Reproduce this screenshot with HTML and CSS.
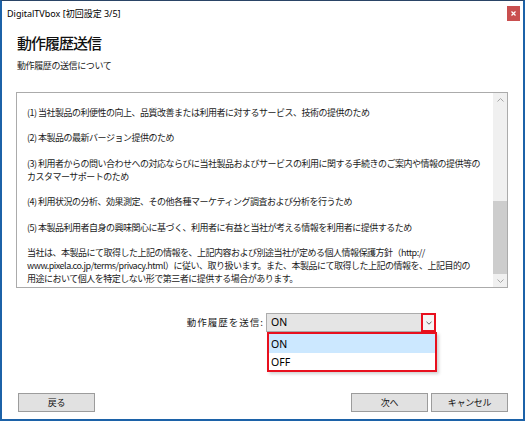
FILE: index.html
```html
<!DOCTYPE html>
<html lang="ja">
<head>
<meta charset="utf-8">
<title>DigitalTVbox</title>
<link rel="stylesheet" href="styles.css">
</head>
<body>
<div class="window">
  <div class="titlebar">
    <span class="title">DigitalTVbox [初回設定 3/5]</span>
    <span class="close"><svg width="5" height="5" viewBox="0 0 5 5"><path d="M0.5 0.5L4.5 4.5M4.5 0.5L0.5 4.5" stroke="#fff" stroke-width="1.2"/></svg></span>
  </div>
  <div class="main">
    <h1 class="heading">動作履歴送信</h1>
    <p class="subtitle">動作履歴の送信について</p>
    <div class="textbox">
      <div class="text">
        <p>(1) 当社製品の利便性の向上、品質改善または利用者に対するサービス、技術の提供のため</p>
        <p>(2) 本製品の最新バージョン提供のため</p>
        <p>(3) 利用者からの問い合わせへの対応ならびに当社製品およびサービスの利用に関する手続きのご案内や情報の提供等の<br>カスタマーサポートのため</p>
        <p>(4) 利用状況の分析、効果測定、その他各種マーケティング調査および分析を行うため</p>
        <p>(5) 本製品利用者自身の興味関心に基づく、利用者に有益と当社が考える情報を利用者に提供するため</p>
        <p>当社は、本製品にて取得した上記の情報を、上記内容および別途当社が定める個人情報保護方針（http://<br>www.pixela.co.jp/terms/privacy.html）に従い、取り扱います。また、本製品にて取得した上記の情報を、上記目的の<br>用途において個人を特定しない形で第三者に提供する場合があります。</p>
      </div>
      <div class="scrollbar">
        <div class="sb-btn"><svg width="7" height="4" viewBox="0 0 7 4"><path d="M0.5 3.5L3.5 0.5L6.5 3.5" fill="none" stroke="#a6a6a6" stroke-width="1"/></svg></div>
        <div class="track"><div class="thumb"></div></div>
        <div class="sb-btn"><svg width="7" height="4" viewBox="0 0 7 4"><path d="M0.5 0.5L3.5 3.5L6.5 0.5" fill="none" stroke="#a6a6a6" stroke-width="1"/></svg></div>
      </div>
    </div>
    <div class="combo-row">
      <span class="label">動作履歴を送信:</span>
      <div class="combo">
        <span class="field">ON</span>
        <span class="dropbtn"><svg width="6" height="4" viewBox="0 0 6 4"><path d="M0.5 0.8L3 3.2L5.5 0.8" fill="none" stroke="#606060" stroke-width="1"/></svg></span>
        <ul class="list">
          <li class="item selected">ON</li>
          <li class="item">OFF</li>
        </ul>
      </div>
    </div>
    <div class="buttons">
      <button class="btn">戻る</button>
      <div class="btn-group">
        <button class="btn">次へ</button>
        <button class="btn">キャンセル</button>
      </div>
    </div>
  </div>
</div>
</body>
</html>
```
FILE: styles.css
```css
* {
  box-sizing: border-box;
  margin: 0;
  padding: 0;
}

body {
  margin: 0;
  width: 525px;
  height: 421px;
  overflow: hidden;
  background: #ffffff;
  font-family: "Noto Sans CJK JP", sans-serif;
  color: #1a1a1a;
}

.window {
  width: 525px;
  height: 421px;
  border-top: 1px solid #2a4466;
  border-left: 2px solid #1c62a8;
  border-right: 2px solid #1c62a8;
  border-bottom: 2px solid #1c62a8;
  display: flex;
  flex-direction: column;
  background: #ffffff;
}

.titlebar {
  height: 27px;
  display: flex;
  justify-content: space-between;
  align-items: flex-start;
  padding-left: 5px;
  padding-right: 3px;
}

.title {
  font-family: "Noto Sans", "Noto Sans CJK JP", sans-serif;
  font-size: 9px;
  line-height: 13px;
  margin-top: 5.5px;
  color: #000000;
}

.close {
  width: 13px;
  height: 15px;
  margin-top: 5px;
  background: #c94f4f;
  display: flex;
  align-items: center;
  justify-content: center;
}

.main {
  flex: 1;
  display: flex;
  flex-direction: column;
  padding: 0 15px 7px 14px;
}

.heading {
  font-size: 15px;
  line-height: 18px;
  font-weight: 500;
  letter-spacing: -1px;
  margin: 6px 0 0 1px;
  color: #111111;
}

.subtitle {
  font-size: 9px;
  line-height: 13px;
  letter-spacing: -0.4px;
  margin: 7px 0 0 1px;
}

.textbox {
  margin-top: 20px;
  height: 196px;
  border: 1px solid #ababab;
  display: flex;
}

.text {
  flex: 1;
  padding: 12.5px 0 0 10px;
  font-size: 9px;
  line-height: 13px;
  letter-spacing: -0.5px;
  white-space: nowrap;
  overflow: hidden;
}

.text p {
  margin-bottom: 12.5px;
}

.scrollbar {
  width: 14px;
  background: #f0f0f0;
  display: flex;
  flex-direction: column;
}

.sb-btn {
  height: 13px;
  display: flex;
  align-items: center;
  justify-content: center;
}

.track {
  flex: 1;
  display: flex;
  flex-direction: column;
  justify-content: flex-end;
}

.thumb {
  height: 73px;
  background: #cdcdcd;
}

.combo-row {
  margin-top: 25px;
  margin-right: 72px;
  display: flex;
  justify-content: flex-end;
  align-items: center;
}

.label {
  font-size: 9.5px;
  line-height: 13px;
  letter-spacing: 1px;
  margin-right: 2px;
  color: #1a1a1a;
}

.combo {
  position: relative;
  width: 170px;
  height: 19px;
  display: flex;
}

.field {
  flex: 1;
  background: #e5e5e5;
  border: 1px solid #acacac;
  border-right: none;
  font-family: "Noto Sans", sans-serif;
  font-size: 10.5px;
  line-height: 17px;
  padding-left: 4px;
  color: #000000;
}

.dropbtn {
  width: 15px;
  border: 2px solid #e8101e;
  background: #f4f4f4;
  display: flex;
  align-items: center;
  justify-content: center;
}

.list {
  position: absolute;
  top: 19px;
  left: 1px;
  width: 170px;
  height: 40px;
  border: 2px solid #e8101e;
  background: #ffffff;
  list-style: none;
  box-shadow: 2px 2px 3px rgba(0, 0, 0, 0.18);
}

.item {
  height: 17px;
  font-family: "Noto Sans", sans-serif;
  font-size: 10.5px;
  line-height: 18px;
  padding-left: 2px;
  color: #000000;
}

.item.selected {
  height: 19px;
  line-height: 20px;
  background: #cce8ff;
}

.buttons {
  margin-top: auto;
  display: flex;
  justify-content: space-between;
  padding-left: 2px;
}

.btn-group {
  display: flex;
  gap: 3px;
}

.btn {
  width: 77px;
  height: 19px;
  background: #e1e1e1;
  border: 1px solid #9c9c9c;
  font-family: "Noto Sans CJK JP", sans-serif;
  font-size: 9px;
  letter-spacing: -0.3px;
  color: #111111;
  display: flex;
  align-items: center;
  justify-content: center;
}
```
